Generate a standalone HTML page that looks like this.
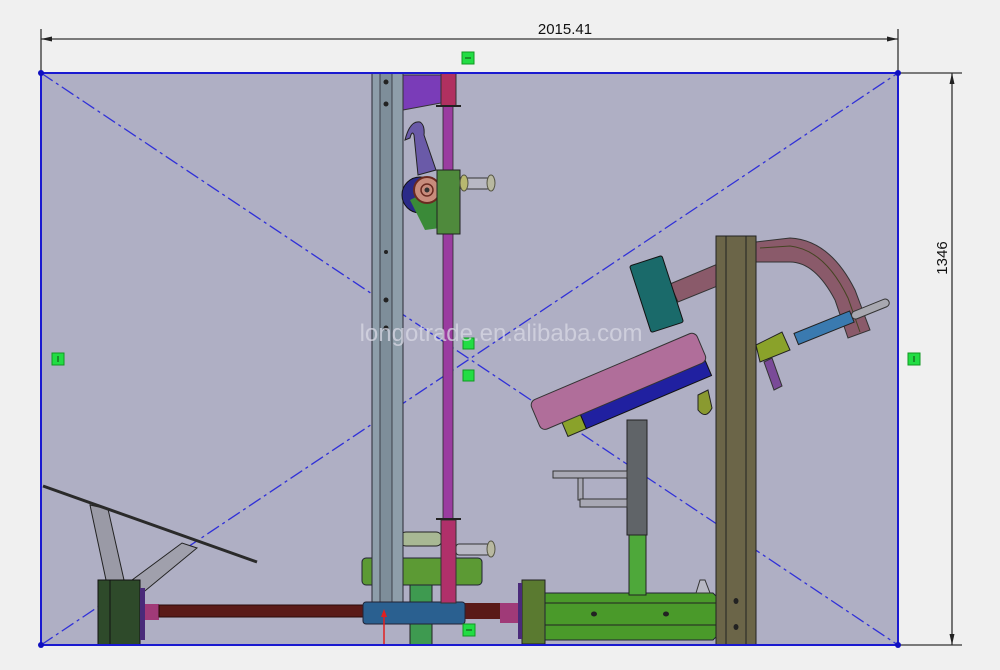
<!DOCTYPE html>
<html><head><meta charset="utf-8"><style>
html,body{margin:0;padding:0;background:#f0f0f0;width:1000px;height:670px;overflow:hidden}
svg{display:block}
</style></head><body>
<svg width="1000" height="670" viewBox="0 0 1000 670" xmlns="http://www.w3.org/2000/svg" font-family="Liberation Sans, sans-serif">
<rect width="1000" height="670" fill="#f0f0f0"/>
<g stroke="#333" stroke-width="1.3" fill="none">
<line x1="41" y1="29" x2="41" y2="73"/><line x1="898" y1="29" x2="898" y2="73"/>
<line x1="41" y1="39" x2="898" y2="39"/>
<line x1="898" y1="73" x2="962" y2="73"/><line x1="898" y1="645" x2="962" y2="645"/>
<line x1="952" y1="73" x2="952" y2="645"/>
</g>
<polygon points="41,39 52,36.5 52,41.5" fill="#222"/><polygon points="898,39 887,36.5 887,41.5" fill="#222"/>
<polygon points="952,73 949.5,84 954.5,84" fill="#222"/><polygon points="952,645 949.5,634 954.5,634" fill="#222"/>
<text x="565" y="34" font-size="15" text-anchor="middle" fill="#111">2015.41</text>
<text transform="translate(947,258) rotate(-90)" font-size="15" text-anchor="middle" fill="#111">1346</text>
<rect x="41" y="73" width="857" height="572" fill="#afafc4"/>
<g stroke="#3030d8" stroke-width="1.3" stroke-dasharray="14,4,3,4" fill="none">
<line x1="41" y1="73" x2="898" y2="645"/><line x1="41" y1="645" x2="898" y2="73"/>
</g>
<polygon points="90,505 108,509 124,580 106,580" fill="#9a9aa6" stroke="#222"/>
<polygon points="128,583 182,543 197,548 140,595" fill="#a0a0ac" stroke="#222"/>
<line x1="43" y1="486" x2="257" y2="562" stroke="#2a2a2a" stroke-width="3"/>
<rect x="98" y="580" width="42" height="65" fill="#2e4a2a" stroke="#111"/>
<line x1="110" y1="580" x2="110" y2="645" stroke="#111"/>
<rect x="140" y="588" width="5" height="52" fill="#4a2a7a"/>
<rect x="145" y="604" width="14" height="16" fill="#a03a78"/>
<rect x="159" y="605" width="210" height="12" fill="#5a1a18" stroke="#2a0a0a"/>
<rect x="465" y="603" width="55" height="16" fill="#5a1a18"/>
<rect x="500" y="603" width="22" height="20" fill="#a03a78"/>
<rect x="410" y="615" width="22" height="30" fill="#3e9a50" stroke="#222"/>
<rect x="410" y="583" width="22" height="20" fill="#3e9a50" stroke="#222"/>
<rect x="362" y="558" width="120" height="27" rx="4" fill="#5c9a34" stroke="#223"/>
<rect x="400" y="532" width="42" height="14" rx="6" fill="#a8b894" stroke="#222"/>
<rect x="372" y="73" width="31" height="532" fill="#8e9eaa" stroke="#2a2a34"/>
<rect x="380" y="73" width="12" height="532" fill="#7e8e9a" stroke="#2a2a34" stroke-width=".8"/>
<g fill="#222"><circle cx="386" cy="82" r="2.5"/><circle cx="386" cy="104" r="2.5"/><circle cx="386" cy="252" r="2"/><circle cx="386" cy="300" r="2.5"/><circle cx="386" cy="328" r="2.5"/></g>
<rect x="363" y="602" width="102" height="22" rx="3" fill="#2a6090" stroke="#223"/>
<line x1="384" y1="645" x2="384" y2="612" stroke="#e02020" stroke-width="1.5"/>
<polygon points="384,609 381,617 387,617" fill="#e02020"/>
<line x1="384" y1="645" x2="402" y2="645" stroke="#e02020" stroke-width="1.5"/>
<rect x="443" y="105" width="10" height="415" fill="#9a3ca0" stroke="#2a2a2a" stroke-width=".8"/>
<rect x="441" y="73" width="15" height="33" fill="#b03060" stroke="#333"/>
<rect x="441" y="520" width="15" height="83" fill="#b0306a" stroke="#333"/>
<line x1="436" y1="519" x2="461" y2="519" stroke="#222" stroke-width="2"/>
<polygon points="403,75 441,75 441,103 403,110" fill="#7a3cb8" stroke="#333"/>
<line x1="436" y1="106" x2="461" y2="106" stroke="#222" stroke-width="2"/>
<path d="M405,140 Q410,120 420,122 Q425,125 424,135 L436,170 L418,175 L414,135 Q412,130 410,138 Z" fill="#6a5aa8" stroke="#222"/>
<circle cx="420" cy="195" r="18" fill="#2a2a88" stroke="#111"/>
<polygon points="410,200 440,185 440,228 425,230" fill="#3a8a38"/>
<circle cx="427" cy="190" r="13" fill="#c88c7c" stroke="#6a2a20" stroke-width="2"/>
<circle cx="427" cy="190" r="6" fill="#c88c7c" stroke="#6a2a20" stroke-width="1.5"/>
<circle cx="427" cy="190" r="2.5" fill="#333"/>
<rect x="437" y="170" width="23" height="64" fill="#4f8a3c" stroke="#222"/>
<rect x="460" y="178" width="30" height="11" rx="3" fill="#b8b8c4" stroke="#333"/>
<ellipse cx="491" cy="183" rx="4" ry="8" fill="#b8b8a0" stroke="#554"/>
<ellipse cx="464" cy="183" rx="4" ry="8" fill="#b8b870" stroke="#554"/>
<rect x="456" y="544" width="34" height="11" rx="3" fill="#b8b8c4" stroke="#333"/>
<ellipse cx="491" cy="549" rx="4" ry="8" fill="#b8b8a0" stroke="#554"/>
<rect x="522" y="580" width="23" height="64" fill="#5a7a30" stroke="#222"/>
<rect x="518" y="583" width="4" height="56" fill="#4a2a7a"/>
<path d="M545,593 L713,593 L720,600 L720,633 L713,640 L545,640 Z" fill="#4a9a2a" stroke="#223"/>
<line x1="545" y1="603" x2="720" y2="603" stroke="#222"/><line x1="545" y1="625" x2="720" y2="625" stroke="#222"/>
<ellipse cx="594" cy="614" rx="3" ry="2.5" fill="#222"/><ellipse cx="666" cy="614" rx="3" ry="2.5" fill="#222"/>
<path d="M696,593 L700,580 L705,580 L710,593 Z" fill="#b8b8c4" stroke="#333"/>
<rect x="629" y="535" width="17" height="60" fill="#4ea83a" stroke="#222"/>
<rect x="627" y="420" width="20" height="115" fill="#606468" stroke="#222"/>
<rect x="553" y="471" width="74" height="7" fill="#a8a8b4" stroke="#333"/>
<rect x="578" y="478" width="5" height="22" fill="#a8a8b4" stroke="#333"/>
<rect x="580" y="499" width="47" height="8" fill="#a8a8b4" stroke="#333"/>
<g transform="rotate(-23 620 385)">
<rect x="552" y="396" width="20" height="16" fill="#8aa22a" stroke="#222"/>
<rect x="572" y="392" width="136" height="20" fill="#2020a0" stroke="#111"/>
<rect x="530" y="365" width="180" height="32" rx="6" fill="#b06e9a" stroke="#333"/>
</g>
<path d="M698,395 L708,390 L712,408 Q706,420 698,410 Z" fill="#8a9a30" stroke="#222"/>
<path d="M670,284 L720,263 L725,283 L678,302 Z" fill="#8a5a6a" stroke="#333"/>
<path d="M756,242 L790,238 Q830,240 855,290 L870,330 L848,338 L835,300 Q815,262 790,262 L756,262 Z" fill="#8a5a6a" stroke="#333"/>
<path d="M760,248 L790,246 Q825,250 848,298 L860,332" fill="none" stroke="#442" stroke-width="1"/>
<g transform="rotate(-22 860 310)">
<rect x="790" y="307" width="60" height="12" fill="#3a7ab0" stroke="#222"/>
<rect x="850" y="309" width="40" height="8" rx="4" fill="#a8a8b0" stroke="#333"/>
</g>
<polygon points="756,345 782,332 790,350 760,362" fill="#8aa22a" stroke="#222"/>
<polygon points="764,362 772,358 782,386 774,390" fill="#7a4a98" stroke="#333"/>
<g transform="rotate(-18 660 295)">
<rect x="640" y="258" width="34" height="70" rx="2" fill="#1a6a6a" stroke="#111"/>
</g>
<rect x="716" y="236" width="40" height="409" fill="#6b6548" stroke="#222"/>
<line x1="726" y1="236" x2="726" y2="645" stroke="#222"/><line x1="746" y1="236" x2="746" y2="645" stroke="#222"/>
<ellipse cx="736" cy="601" rx="2.5" ry="3" fill="#222"/><ellipse cx="736" cy="627" rx="2.5" ry="3" fill="#222"/>
<rect x="41" y="73" width="857" height="572" fill="none" stroke="#1a1ad0" stroke-width="2"/>
<g fill="#1010c0"><circle cx="41" cy="73" r="3"/><circle cx="898" cy="73" r="3"/><circle cx="41" cy="645" r="3"/><circle cx="898" cy="645" r="3"/></g>
<g fill="#22dd44" stroke="#119922"><rect x="462" y="52" width="12" height="12"/><rect x="52" y="353" width="12" height="12"/><rect x="908" y="353" width="12" height="12"/><rect x="463" y="624" width="12" height="12"/><rect x="463" y="338" width="11" height="11"/><rect x="463" y="370" width="11" height="11"/></g>
<g stroke="#114411"><line x1="465" y1="58" x2="471" y2="58"/><line x1="58" y1="356" x2="58" y2="362"/><line x1="914" y1="356" x2="914" y2="362"/><line x1="466" y1="630" x2="472" y2="630"/></g>
<text x="501" y="341" font-size="24" text-anchor="middle" fill="#d8d8e4" fill-opacity=".75">longotrade.en.alibaba.com</text>
</svg>
</body></html>
